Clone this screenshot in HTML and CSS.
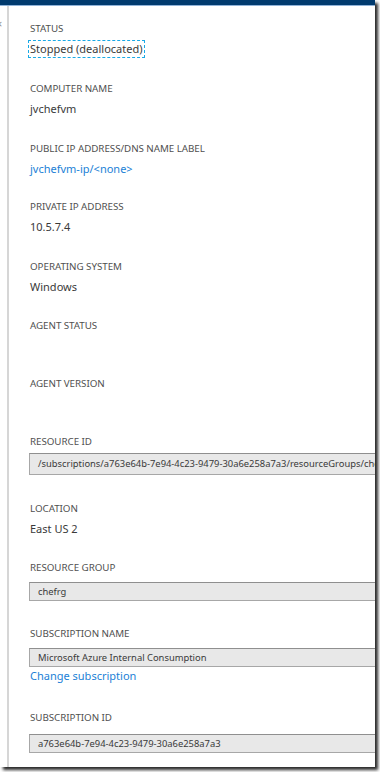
FILE: index.html
```html
<!DOCTYPE html>
<html>
<head>
<meta charset="utf-8">
<link rel="stylesheet" href="styles.css">
</head>
<body>
<div class="frame">
  <div class="topbar"></div>
  <div class="body">
    <div class="gutter"><span class="close">×</span></div>
    <div class="main">
      <div class="field">
        <div class="label">STATUS</div>
        <div class="value"><span class="focus">Stopped (deallocated)</span></div>
      </div>
      <div class="field">
        <div class="label">COMPUTER NAME</div>
        <div class="value">jvchefvm</div>
      </div>
      <div class="field less-2">
        <div class="label">PUBLIC IP ADDRESS/DNS NAME LABEL</div>
        <div class="value link">jvchefvm-ip/&lt;none&gt;</div>
      </div>
      <div class="field">
        <div class="label">PRIVATE IP ADDRESS</div>
        <div class="value">10.5.7.4</div>
      </div>
      <div class="field less-1">
        <div class="label">OPERATING SYSTEM</div>
        <div class="value">Windows</div>
      </div>
      <div class="field less-2">
        <div class="label">AGENT STATUS</div>
        <div class="value"></div>
      </div>
      <div class="field less-2">
        <div class="label">AGENT VERSION</div>
        <div class="value"></div>
      </div>
      <div class="field more-2">
        <div class="label">RESOURCE ID</div>
        <div class="box box-first">/subscriptions/a763e64b-7e94-4c23-9479-30a6e258a7a3/resourceGroups/chefrg/providers/Microsoft.Compute</div>
      </div>
      <div class="field less-1">
        <div class="label">LOCATION</div>
        <div class="value">East US 2</div>
      </div>
      <div class="field more-1">
        <div class="label">RESOURCE GROUP</div>
        <div class="box">chefrg</div>
      </div>
      <div class="field more-2">
        <div class="label">SUBSCRIPTION NAME</div>
        <div class="box">Microsoft Azure Internal Consumption</div>
        <div class="value link change">Change subscription</div>
      </div>
      <div class="field">
        <div class="label">SUBSCRIPTION ID</div>
        <div class="box box-last">a763e64b-7e94-4c23-9479-30a6e258a7a3</div>
      </div>
    </div>
  </div>
</div>
</body>
</html>
```

FILE: styles.css
```css
html, body {
  margin: 0;
  padding: 0;
  background: #ffffff;
}

body {
  width: 380px;
  height: 772px;
  overflow: hidden;
  font-family: "Segoe UI", "Noto Sans", "Open Sans", sans-serif;
}

.frame {
  width: 375px;
  height: 767px;
  background: #ffffff;
  box-shadow: 3px 3px 3px #2a2a2a;
  overflow: hidden;
  display: flex;
  flex-direction: column;
}

.topbar {
  height: 5px;
  background: #003a6e;
  border-bottom: 1px solid #8fb2d8;
  flex: none;
}

.body {
  flex: 1;
  display: flex;
}

.gutter {
  width: 7px;
  flex: none;
  overflow: hidden;
  border-right: 2px solid #d6d6d6;
}

.close {
  display: block;
  margin-top: 12px;
  margin-left: -4px;
  font-size: 11px;
  line-height: 12px;
  color: #888888;
}

.main {
  flex: 1;
  padding: 15px 0 0 21px;
  display: flex;
  flex-direction: column;
  gap: 24px;
  min-width: 0;
}

.field {
  display: flex;
  flex-direction: column;
}

.field.less-1 { margin-bottom: -1px; }
.field.less-2 { margin-bottom: -2px; }
.field.more-1 { margin-bottom: 1px; }
.field.more-2 { margin-bottom: 2px; }

.label {
  font-size: 9.8px;
  line-height: 16px;
  height: 16px;
  color: #505050;
  letter-spacing: -0.05px;
  white-space: nowrap;
}

.value {
  margin-top: 4px;
  font-size: 11px;
  line-height: 16px;
  height: 16px;
  color: #3a3a3a;
  white-space: nowrap;
}

.focus {
  display: inline-block;
  margin-left: -1px;
  padding: 0 1px;
  outline: 1px dashed #1aa9e6;
  outline-offset: 0;
  line-height: 16px;
}

.link {
  color: #1b7fd6;
}

.box {
  margin-top: 6px;
  width: 370px;
  height: 19px;
  box-sizing: border-box;
  border: 1px solid #a7a7a7;
  border-top-color: #8f8f8f;
  background: #e8e8e8;
  padding-left: 8px;
  font-size: 9.4px;
  line-height: 17px;
  color: #3a3a3a;
  white-space: nowrap;
  overflow: hidden;
  margin-left: -1px;
}

.box-first {
  margin-top: 3px;
  height: 22px;
  line-height: 20px;
}

.box-last {
  margin-top: 8px;
}

.change {
  margin-top: 1px;
}
```
